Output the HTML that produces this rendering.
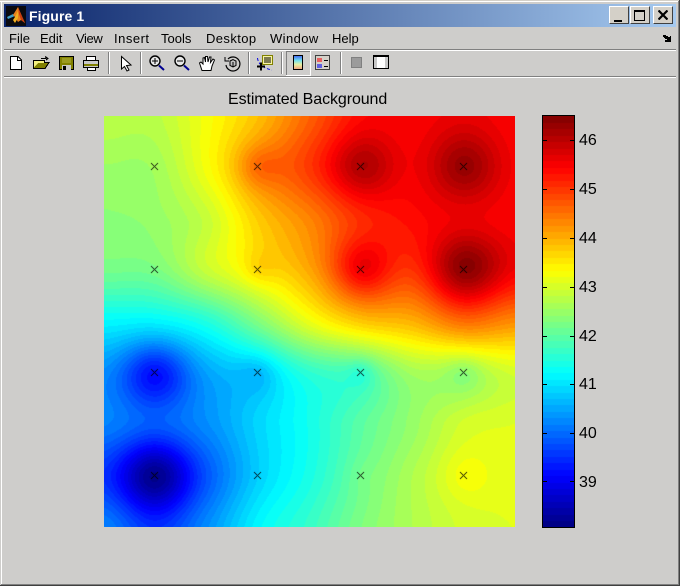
<!DOCTYPE html>
<html><head><meta charset="utf-8"><style>
html,body{margin:0;padding:0;background:#cecdcb}
#w{position:relative;width:680px;height:586px;overflow:hidden;background:#cecdcb;font-family:"Liberation Sans",sans-serif;color:#000}
.a{position:absolute}
#tb{left:4px;top:4px;width:672px;height:23px;background:linear-gradient(90deg,#0a246a,#a6caf0)}
#tt{left:29px;top:7px;font:bold 14px/18px "Liberation Sans",sans-serif;color:#fff;letter-spacing:.1px;white-space:nowrap}
.m{position:absolute;top:31px;font-size:13px;line-height:16px;color:#000;white-space:nowrap}
.l{position:absolute;left:4px;width:672px;height:1px;background:#808080;box-shadow:0 1px 0 #fff}
.t{position:absolute;left:579px;font-size:16px;line-height:18px;color:#000;white-space:nowrap}
.b{position:absolute;top:6px;width:18px;height:16px;background:#d4d0c8;border:1px solid;border-color:#fff #404040 #404040 #fff}
</style></head><body><div id="w">
<div class="a" style="left:0;top:0;width:680px;height:1px;background:#d4d0c8"></div>
<div class="a" style="left:0;top:1px;width:679px;height:1px;background:#fff"></div>
<div class="a" style="left:1px;top:1px;width:1px;height:583px;background:#fff"></div>
<div class="a" style="left:678px;top:1px;width:1px;height:584px;background:#808080"></div>
<div class="a" style="left:679px;top:0;width:1px;height:586px;background:#404040"></div>
<div class="a" style="left:1px;top:584px;width:678px;height:1px;background:#808080"></div>
<div class="a" style="left:0;top:585px;width:680px;height:1px;background:#404040"></div>
<div class="a" id="tb"></div>
<svg class="a" style="left:6px;top:6px" width="20" height="20" viewBox="0 0 20 20"><rect width="20" height="20" fill="#0b0b10"/><path d="M1 11L7 8 9 10 2 13Z" fill="#3f9fc8"/><path d="M7 9L12 1 15 8 19 17 15 14 12 16 9 11Z" fill="#e8801c"/><path d="M12 1L15 8 19 17 15 14 13 8Z" fill="#c83c10"/><path d="M9 11L12 5 12 12 9 17 7 14Z" fill="#f0b020"/></svg>
<div class="a" id="tt">Figure 1</div>
<div class="b" style="left:609px"><div class="a" style="left:4px;top:13px;width:8px;height:2px;background:#000"></div></div>
<div class="b" style="left:630px"><div class="a" style="left:3px;top:3px;width:9px;height:8px;border:1px solid #000;border-top-width:2px"></div></div>
<div class="b" style="left:653px"><svg class="a" style="left:4px;top:3px" width="10" height="10" viewBox="0 0 10 10"><path d="M.5 .5L9.5 9.5M9.5 .5L.5 9.5" stroke="#000" stroke-width="2.2"/></svg></div>
<div class="m" style="left:9px">File</div><div class="m" style="left:40px">Edit</div><div class="m" style="left:76px;letter-spacing:-.4px">View</div><div class="m" style="left:114px;letter-spacing:.5px">Insert</div><div class="m" style="left:161px">Tools</div><div class="m" style="left:206px;letter-spacing:.4px">Desktop</div><div class="m" style="left:270px;letter-spacing:.4px">Window</div><div class="m" style="left:332px">Help</div>
<svg class="a" style="left:662px;top:34px" width="10" height="8" viewBox="0 0 10 8"><path d="M1 1H4V2H6V3H8V2H9V8H3V6H5V5H3V4H2V3H1Z" fill="#000"/></svg>
<div class="l" style="top:49px"></div>
<div class="l" style="top:76px"></div>
<svg class="a" style="left:0;top:50px" width="400" height="27" viewBox="0 50 400 27">
<defs><linearGradient id="cb" x1="0" y1="0" x2="0" y2="1"><stop offset="0" stop-color="#4060f0"/><stop offset=".35" stop-color="#70e0f0"/><stop offset=".65" stop-color="#e8f0a0"/><stop offset="1" stop-color="#f0a080"/></linearGradient></defs>
<g shape-rendering="crispEdges">
<rect x="108" y="52" width="1" height="22" fill="#808080"/><rect x="109" y="52" width="1" height="22" fill="#fff"/>
<rect x="140" y="52" width="1" height="22" fill="#808080"/><rect x="141" y="52" width="1" height="22" fill="#fff"/>
<rect x="248" y="52" width="1" height="22" fill="#808080"/><rect x="249" y="52" width="1" height="22" fill="#fff"/>
<rect x="281" y="52" width="1" height="22" fill="#808080"/><rect x="282" y="52" width="1" height="22" fill="#fff"/>
<rect x="340" y="52" width="1" height="22" fill="#808080"/><rect x="341" y="52" width="1" height="22" fill="#fff"/>
<path d="M286.5 75V51.5H310" fill="none" stroke="#808080"/><path d="M310.5 51V75.5H286" fill="none" stroke="#fff"/>
<path d="M10.5 56.5H18L21.5 60V69.5H10.5Z" fill="#fff" stroke="#000"/><path d="M17.5 57V60.5H21" fill="none" stroke="#000"/>
<path d="M33.5 60.5H44.5V62.5H49L45 68.5H33.5Z" fill="#808000" stroke="#000"/><path d="M34 61H44V63H38L34 67Z" fill="#f4f080"/><path d="M41 58.5H46V57M45 56.5L48 58.5 46 60" fill="none" stroke="#000"/>
<rect x="59.5" y="56.5" width="14" height="13" fill="#808000" stroke="#000"/><rect x="62" y="58" width="9" height="5" fill="#9a9a20"/><rect x="62" y="65" width="9" height="5" fill="#c8c8c8"/><rect x="63" y="66" width="3" height="4" fill="#000"/>
<path d="M86.5 56.5H95.5V60.5H86.5Z" fill="#fff" stroke="#000"/><path d="M83.5 60.5H98.5V67.5H83.5Z" fill="#c8c8c8" stroke="#000"/><rect x="84" y="64" width="14" height="2" fill="#808000"/><path d="M87.5 67.5H95.5V70.5H87.5Z" fill="#fff" stroke="#000"/>
<rect x="351.5" y="57.5" width="10" height="10" fill="#9b9b9b" stroke="#808080"/>
<rect x="373.5" y="55.5" width="15" height="13" fill="#fff" stroke="#000"/><rect x="374" y="56" width="14" height="1" fill="#000"/><rect x="374" y="57" width="3" height="11" fill="#c8c8c8"/><rect x="385" y="57" width="3" height="11" fill="#c8c8c8"/>
<rect x="315.5" y="55.5" width="14" height="14" fill="#d4d0c8" stroke="#404040"/><rect x="317" y="58" width="5" height="4" fill="#e86060"/><rect x="317" y="64" width="5" height="4" fill="#6060e0"/><rect x="324" y="60" width="4" height="1" fill="#000"/><rect x="324" y="66" width="4" height="1" fill="#000"/>
<rect x="293.5" y="55.5" width="9" height="14" fill="url(#cb)" stroke="#000"/>
</g>
<path d="M121.5 56.5V69L124.5 66.5 127 71 129 70 126.5 65.5 131 65Z" fill="#fff" stroke="#000"/>
<circle cx="155" cy="61" r="5" fill="#e8e8e8" stroke="#000" stroke-width="1.4"/><path d="M152 61H158M155 58V64" stroke="#000"/><path d="M159 65.5L164 70" stroke="#000090" stroke-width="2"/>
<circle cx="180" cy="61" r="5" fill="#e8e8e8" stroke="#000" stroke-width="1.4"/><path d="M177 61H183" stroke="#000"/><path d="M184 65.5L189 70" stroke="#000090" stroke-width="2"/>
<path d="M202 70.5L199.5 63 201 62 203 64V58L204.5 57.5 205.5 62V56.5H207.5L208 62 209.5 57H211L210.5 62.5 213 59 214.5 60 212 66 211 70.5Z" fill="#fff" stroke="#000"/>
<path d="M228 59A7 7 0 1 1 226 65" fill="none" stroke="#000" stroke-width="1.2"/><path d="M225 57V61H229" fill="none" stroke="#000"/><path d="M230 61L233 59.5 236 61V65.5L233 67 230 65.5Z" fill="#c0c0c0" stroke="#000"/><path d="M233 62V67" stroke="#000"/>
<path d="M257.5 58C258 63 262 68 272 70" fill="none" stroke="#0000e0" stroke-dasharray="3 2"/>
<rect x="262.5" y="55.5" width="10" height="9" fill="#f8f4a0" stroke="#808000" shape-rendering="crispEdges"/><path d="M264 58H271M264 60H271M264 62H271" stroke="#000" shape-rendering="crispEdges"/>
<path d="M257 66.5H265M261 62.5V70.5" stroke="#000" stroke-width="2" shape-rendering="crispEdges"/>
</svg>
<div class="a" style="left:228px;top:90px;font-size:16px;line-height:19px;white-space:nowrap;letter-spacing:-.09px">Estimated Background</div>
<canvas class="a" id="c" width="411" height="411" style="left:104px;top:116px"></canvas>
<canvas class="a" id="d" width="31" height="411" style="left:543px;top:116px"></canvas>
<div class="a" style="left:542px;top:115px;width:31px;height:411px;border:1px solid #000"></div>
<svg class="a" style="left:542px;top:115px" width="33" height="413" viewBox="542 115 33 413" shape-rendering="crispEdges"><path d="M543 140.5h4M570 140.5h4M543 189.5h4M570 189.5h4M543 238.5h4M570 238.5h4M543 287.5h4M570 287.5h4M543 336.5h4M570 336.5h4M543 384.5h4M570 384.5h4M543 433.5h4M570 433.5h4M543 481.5h4M570 481.5h4" stroke="#000"/></svg>
<div class="t" style="top:132px">46</div><div class="t" style="top:181px">45</div><div class="t" style="top:230px">44</div><div class="t" style="top:279px">43</div><div class="t" style="top:328px">42</div><div class="t" style="top:376px">41</div><div class="t" style="top:425px">40</div><div class="t" style="top:474px">39</div>
<script>
(function(){
var G=[
[42.8,42.8,43.3,43.9,44.7,45.4,45.5,45.6,45.5],
[42.55,42.6,43.3,44.25,45.0,45.5,45.5,45.6,45.5],
[42.4,42.5,42.9,43.8,44.4,45.1,45.4,45.5,45.5],
[42.2,42.25,42.9,43.45,44.1,45.15,45.0,45.6,45.5],
[41.2,41.2,41.5,42.3,43.2,43.8,44.0,44.5,44.3],
[40.3,39.9,40.5,40.95,41.6,41.9,42.6,42.65,43.0],
[40.2,40.0,40.3,40.9,41.4,42.0,42.5,43.0,43.1],
[39.6,39.2,39.9,40.85,41.45,42.1,42.7,43.05,43.15],
[40.2,39.6,40.3,41.2,41.7,42.3,42.7,43.0,43.1]];
var B=[[361,166,.65,22],[464,166,.75,24],[361,269,.45,18],[464,269,.85,24],[155,475,-1.05,24],[155,372,-.7,22],
[258,372,-.3,14],[361,372,-.3,10],[464,372,-.25,12],[464,475,.25,18],[361,475,.1,14],[258,166,.4,15],[258,269,.25,12]];
var MIN=38.05,MAX=46.55,L=64;
function jet(t){
 t=Math.max(0,Math.min(.9999,t));t=(Math.floor(t*L)+.5)/L;
 function c(x){return Math.max(0,Math.min(1,1.5-Math.abs(4*t-x)))}
 return [c(3)*255,c(2)*255,c(1)*255];
}
function cr(a,b,c,d,t){return b+.5*t*(c-a+t*(2*a-5*b+4*c-d+t*(3*b-a-3*c+d)))}
function g(i,j){i=Math.max(0,Math.min(8,i));j=Math.max(0,Math.min(8,j));return G[i][j]}
function f(x,y){
 var u=x/51.375,v=y/51.375,i=Math.min(7,Math.floor(v)),j=Math.min(7,Math.floor(u)),s=u-j,t=v-i,r=[];
 for(var k=-1;k<3;k++)r.push(cr(g(i+k,j-1),g(i+k,j),g(i+k,j+1),g(i+k,j+2),s));
 var z=cr(r[0],r[1],r[2],r[3],t);
 for(var n=0;n<B.length;n++){var b=B[n],dx=x+104-b[0],dy=y+116-b[1];z+=b[2]*Math.exp(-(dx*dx+dy*dy)/(2*b[3]*b[3]));}
 return z;
}
var c=document.getElementById('c').getContext('2d'),im=c.createImageData(411,411);
for(var y=0;y<411;y++)for(var x=0;x<411;x++){
 var q=jet((f(x,y)-MIN)/(MAX-MIN)),o=(y*411+x)*4;
 im.data[o]=q[0];im.data[o+1]=q[1];im.data[o+2]=q[2];im.data[o+3]=255;
}
c.putImageData(im,0,0);
c.fillStyle='#000';
[50,153,256,359].forEach(function(cx){[50,153,256,359].forEach(function(cy){
 for(var d=-3;d<=3;d++){c.fillRect(cx+d,cy+d,1,1);c.fillRect(cx+d,cy-d,1,1);}
})});
var e=document.getElementById('d').getContext('2d');
for(var y=0;y<411;y++){var q=jet(1-y/411);e.fillStyle='rgb('+(q[0]|0)+','+(q[1]|0)+','+(q[2]|0)+')';e.fillRect(0,y,31,1);}
})();
</script>
</div></body></html>
